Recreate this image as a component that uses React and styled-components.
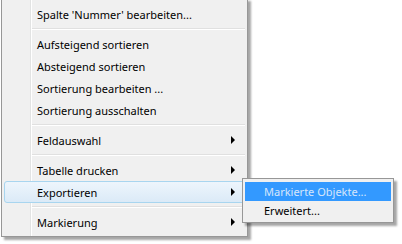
import React from 'react';
import styled, { createGlobalStyle } from 'styled-components';

const GlobalStyle = createGlobalStyle`
	body {
		margin: 0;
		background: #ffffff;
		font-family: 'Noto Sans', 'Open Sans', sans-serif;
		font-size: 11px;
		color: #000;
		overflow: hidden;
	}
`;

const Stage = styled.div`
	width: 402px;
	height: 244px;
	padding-left: 1px;
	box-sizing: border-box;
`;

const Menu = styled.div`
	position: relative;
	width: 247px;
	margin-top: -2px;
	box-sizing: border-box;
	border: 1px solid #979797;
	padding: 4px 2px 3px 2px;
	background-color: #f0f0f0;
	background-image: linear-gradient(
		to right,
		transparent 28px,
		#e2e3e3 28px,
		#e2e3e3 29px,
		#ffffff 29px,
		#ffffff 30px,
		transparent 30px
	);
	box-shadow: 3px 3px 2px rgba(0, 0, 0, 0.35);
`;

const Item = styled.div`
	position: relative;
	height: 22px;
	box-sizing: border-box;
	display: flex;
	align-items: center;
	padding: 1px 9px 0 32px;
	border: 1px solid ${(p) => (p.active ? '#a8d5ef' : 'transparent')};
	border-radius: 3px;
	background: ${(p) =>
		p.active ? 'linear-gradient(to bottom, #edf5fc, #dbeaf7)' : 'transparent'};
	white-space: nowrap;
`;

const Label = styled.span`
	flex: 1;
	line-height: 19px;
`;

const Arrow = styled.span`
	width: 0;
	height: 0;
	margin-bottom: 1px;
	border-top: 4px solid transparent;
	border-bottom: 4px solid transparent;
	border-left: 4px solid #000;
`;

const Separator = styled.div`
	height: 8px;
	margin-left: 28px;
	display: flex;
	flex-direction: column;
	justify-content: center;

	&::before {
		content: '';
		display: block;
		height: 1px;
		background: #e0e0e0;
	}
	&::after {
		content: '';
		display: block;
		height: 1px;
		background: #ffffff;
	}
`;

const SubMenu = styled.div`
	position: absolute;
	left: 237px;
	top: -4px;
	width: 152px;
	box-sizing: border-box;
	border: 1px solid #979797;
	padding: 3px 2px 2px 2px;
	background: #f0f0f0;
	box-shadow: 3px 3px 2px rgba(0, 0, 0, 0.35);
	z-index: 2;
`;

const SubItem = styled.div`
	height: 19px;
	display: flex;
	align-items: center;
	padding-left: 19px;
	background: ${(p) => (p.active ? '#3399ff' : 'transparent')};
	color: ${(p) => (p.active ? '#d6e6fb' : '#000')};
	white-space: nowrap;
`;

const items = [
	{ label: "Spalte 'Nummer' bearbeiten..." },
	'sep',
	{ label: 'Aufsteigend sortieren' },
	{ label: 'Absteigend sortieren' },
	{ label: 'Sortierung bearbeiten ...' },
	{ label: 'Sortierung ausschalten' },
	'sep',
	{ label: 'Feldauswahl', sub: true },
	'sep',
	{ label: 'Tabelle drucken', sub: true },
	{ label: 'Exportieren', sub: true, active: true },
	'sep',
	{ label: 'Markierung', sub: true },
];

const App = () => {
	return (
		<React.Fragment>
			<GlobalStyle />
			<Stage>
				<Menu>
					{items.map((it, i) =>
						it === 'sep' ? (
							<Separator key={i} />
						) : (
							<Item key={i} active={it.active}>
								<Label>{it.label}</Label>
								{it.sub && <Arrow />}
								{it.active && (
									<SubMenu>
										<SubItem active>Markierte Objekte...</SubItem>
										<SubItem>Erweitert...</SubItem>
									</SubMenu>
								)}
							</Item>
						)
					)}
				</Menu>
			</Stage>
		</React.Fragment>
	);
};

export default App;
